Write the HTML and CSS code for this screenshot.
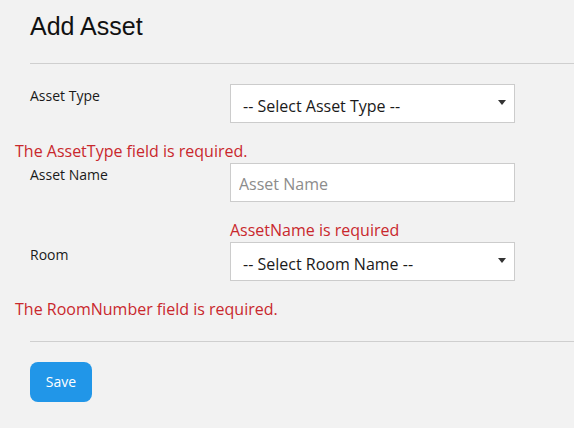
FILE: index.html
```html
<!DOCTYPE html>
<html>
<head>
<meta charset="utf-8">
<title>Add Asset</title>
<link rel="stylesheet" href="styles.css">
</head>
<body>
<div class="page">
  <h2 class="title">Add Asset</h2>
  <hr class="divider divider-top">
  <form class="form">
    <div class="row">
      <label class="label">Asset Type</label>
      <div class="control">
        <div class="select-wrap">
          <select class="field select">
            <option>-- Select Asset Type --</option>
          </select>
        </div>
      </div>
    </div>
    <div class="error error-wide">The AssetType field is required.</div>
    <div class="row">
      <label class="label">Asset Name</label>
      <div class="control">
        <input class="field input" type="text" placeholder="Asset Name">
        <div class="error error-inline">AssetName is required</div>
      </div>
    </div>
    <div class="row">
      <label class="label label-room">Room</label>
      <div class="control">
        <div class="select-wrap">
          <select class="field select">
            <option>-- Select Room Name --</option>
          </select>
        </div>
      </div>
    </div>
    <div class="error error-wide">The RoomNumber field is required.</div>
  </form>
  <hr class="divider divider-bottom">
  <div class="actions">
    <button class="btn" type="button">Save</button>
  </div>
</div>
</body>
</html>
```
FILE: styles.css
```css
* { box-sizing: border-box; }
html, body {
  margin: 0;
  padding: 0;
  background: #f2f2f2;
  height: 100%;
}
body {
  font-family: "Open Sans", "Noto Sans", sans-serif;
  color: #222;
}
.page {
  padding: 11px 0 0 0;
}
.title {
  margin: 0 0 0 30px;
  font-family: "Liberation Sans", Arial, sans-serif;
  font-weight: normal;
  font-size: 25px;
  line-height: 30px;
  color: #111;
}
.divider {
  border: 0;
  border-top: 1px solid #cfcfcf;
  margin: 0 0 0 30px;
  height: 0;
}
.divider-top { margin-top: 22px; }
.form {
  padding: 20px 0 0 15px;
}
.row {
  display: flex;
  align-items: flex-start;
}
.label {
  width: 200px;
  margin-left: 15px;
  font-size: 14px;
  line-height: 20px;
  padding-top: 2px;
  color: #1a1a1a;
}
.label-room { padding-top: 3px; }
.control {
  width: 285px;
}
.field {
  display: block;
  width: 285px;
  height: 39px;
  border: 1px solid #cccccc;
  background: #ffffff;
  font-family: "Open Sans", "Noto Sans", sans-serif;
  font-size: 16px;
  color: #1a1a1a;
  border-radius: 0;
  margin: 0;
  outline: none;
}
.select-wrap {
  position: relative;
}
.select {
  -webkit-appearance: none;
  appearance: none;
  padding: 5px 24px 0 12px;
}
.select-wrap::after {
  content: "";
  position: absolute;
  right: 9px;
  top: 16px;
  width: 0;
  height: 0;
  border-left: 4.5px solid transparent;
  border-right: 4.5px solid transparent;
  border-top: 5px solid #333;
  pointer-events: none;
}
.input {
  padding: 2px 8px 0 8px;
}
.input::placeholder {
  color: #8c8c8c;
}
.error {
  color: #c9282d;
  font-size: 16px;
  line-height: 24px;
  margin-top: 16px;
}
.error-wide {
  margin-left: 0;
}
.error-inline {
  margin-top: 16px;
}
.divider-bottom { margin-top: 20px; }
.actions {
  padding: 20px 0 0 30px;
}
.btn {
  background: #2196e8;
  color: #fff;
  border: 0;
  border-radius: 8px;
  height: 40px;
  width: 62px;
  padding: 0 0 1px 0;
  font-family: "Open Sans", "Noto Sans", sans-serif;
  font-size: 14px;
  cursor: pointer;
}
```
